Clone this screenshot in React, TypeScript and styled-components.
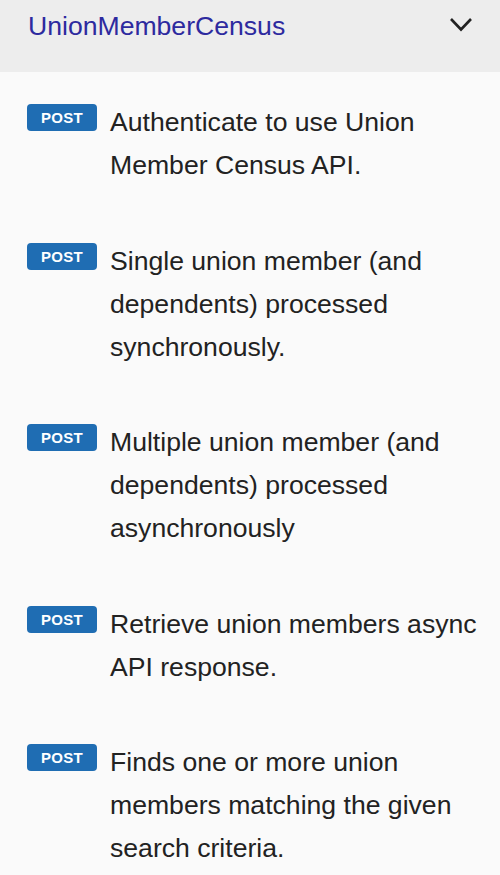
import React from 'react';
import styled, { createGlobalStyle } from 'styled-components';

const GlobalStyle = createGlobalStyle`
  html, body {
    margin: 0;
    padding: 0;
    background: #fafafa;
    font-family: 'Liberation Sans', Arial, sans-serif;
  }
`;

const operations = [
  'Authenticate to use Union Member Census API.',
  'Single union member (and dependents) processed synchronously.',
  'Multiple union member (and dependents) processed asynchronously',
  'Retrieve union members async API response.',
  'Finds one or more union members matching the given search criteria.',
];

const Page = styled.div`
  width: 500px;
  min-height: 875px;
  background: #fafafa;
`;

const Header = styled.div`
  display: flex;
  justify-content: space-between;
  align-items: flex-start;
  height: 72px;
  padding: 10px 27px 0 28px;
  box-sizing: border-box;
  background: #ededed;
`;

const Title = styled.span`
  font-size: 26.6px;
  line-height: 32px;
  color: #2d2a9f;
`;

const Chevron = styled.svg`
  margin-top: 7px;
`;

const List = styled.div`
  display: flex;
  flex-direction: column;
  gap: 52.5px;
  padding: 29px 12px 0 27px;
`;

const Item = styled.div`
  display: flex;
  align-items: flex-start;
  gap: 13px;
`;

const Badge = styled.span`
  flex: none;
  display: flex;
  align-items: center;
  justify-content: center;
  width: 70px;
  height: 27px;
  margin-top: 3px;
  border-radius: 4px;
  background: #1f6db3;
  color: #fff;
  font-family: 'Liberation Sans', Arial, sans-serif;
  font-weight: bold;
  font-size: 15px;
  letter-spacing: 0.3px;
`;

const Summary = styled.span`
  font-size: 26.6px;
  line-height: 43px;
  color: #222;
`;

const App: React.FC = () => (
  <Page>
    <GlobalStyle />
    <Header>
      <Title>UnionMemberCensus</Title>
      <Chevron width="24" height="16" viewBox="0 0 24 16">
        <path d="M2 2 L12 12.5 L22 2" fill="none" stroke="#222" strokeWidth="2.6" />
      </Chevron>
    </Header>
    <List>
      {operations.map((op) => (
        <Item key={op}>
          <Badge>POST</Badge>
          <Summary>{op}</Summary>
        </Item>
      ))}
    </List>
  </Page>
);

export default App;
